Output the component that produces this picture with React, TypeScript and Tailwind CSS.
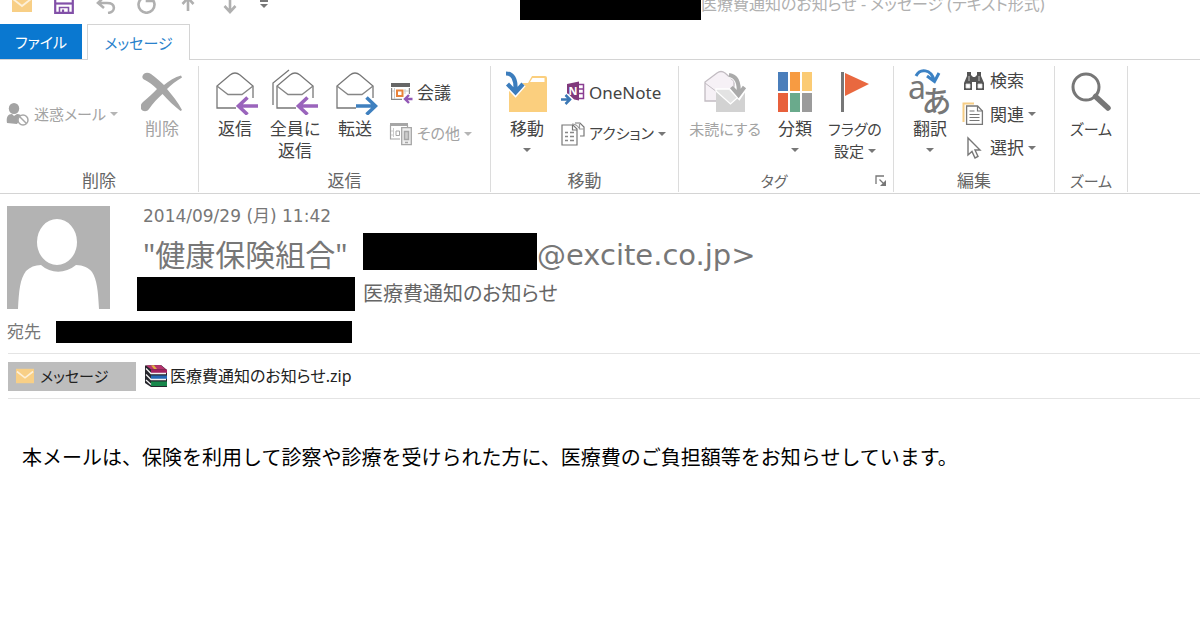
import React from 'react';
import { clsx } from 'clsx';

interface IconProps {
  className?: string;
}

interface LargeButtonProps {
  icon: React.ReactNode;
  lines: string[];
  width?: string;
  size?: string;
  menu?: boolean;
  disabled?: boolean;
}

interface SmallButtonProps {
  icon: React.ReactNode;
  label: string;
  size?: string;
  menu?: boolean;
  disabled?: boolean;
}

interface GroupProps {
  label: string;
  width: string;
  size?: string;
  launcher?: boolean;
  children: React.ReactNode;
}

const Caret: React.FC<IconProps> = ({ className }) => (
  <svg viewBox="0 0 8 4" className={clsx('h-1 w-2 shrink-0', className)} fill="currentColor" aria-hidden="true">
    <path d="M0 0h8L4 4z" />
  </svg>
);

const MailIcon: React.FC<IconProps> = ({ className }) => (
  <svg viewBox="0 0 20 16" className={className} aria-hidden="true">
    <rect width="20" height="16" fill="#f8cf86" />
    <path d="M1 3l9 7 9-7" fill="none" stroke="#fdf0d8" strokeWidth="1.8" />
  </svg>
);

const SaveIcon = () => (
  <svg viewBox="0 0 20 20" className="size-5" fill="none" stroke="#8250a8" strokeWidth="2.2" aria-hidden="true">
    <path d="M1.2 1.2h17.6v17.6H1.200z" />
    <path d="M1 9.500h18" />
    <path d="M5.500 19v-5.500h9V19" strokeWidth="1.600" />
    <path d="M9 15.500v3.500" />
  </svg>
);

const UndoIcon = () => (
  <svg viewBox="0 0 20 20" className="size-5" fill="none" stroke="#b0b0b0" strokeWidth="2.6" aria-hidden="true">
    <path d="M8 3L2 9l6 5M2 9h9c9 0 9 9 1 10" />
  </svg>
);

const RedoIcon = () => (
  <svg viewBox="0 0 20 20" className="size-5" fill="none" stroke="#b0b0b0" strokeWidth="2.6" aria-hidden="true">
    <path d="M15.500 4.500a8 8 0 1 1-10 0M11 0v7h7" />
  </svg>
);

const ArrowIcon: React.FC<{ down?: boolean }> = ({ down }) => (
  <svg viewBox="0 0 20 20" className="size-5" fill="none" stroke="#b0b0b0" strokeWidth="2.6" aria-hidden="true">
    <path d={down ? 'M10 1v16M4.500 12l5.500 6 5.500-6' : 'M10 17V4M4.500 10L10 4l5.500 6'} />
  </svg>
);

const JunkIcon = () => (
  <svg viewBox="0 0 24 24" className="size-6" aria-hidden="true">
    <ellipse cx="8" cy="6.500" rx="5.200" ry="5.500" fill="#a3a3a3" />
    <path d="M1 21c-1-6 1-9 5-9l2 2 3-2c3 0 4 1 5 3l-5 7z" fill="#a3a3a3" />
    <circle cx="17" cy="18" r="5" fill="#fff" stroke="#a8a8a8" strokeWidth="1.500" />
    <path d="M13.500 14.500l7 7" stroke="#a8a8a8" strokeWidth="1.500" />
  </svg>
);

const DeleteIcon = () => (
  <svg viewBox="0 0 42 40" className="h-10 w-[42px]" fill="#a6a6a6" aria-hidden="true">
    <path d="M1.500 4C3 0 7 0 10 2c5 4 9 7 13 11C28 9 34 5 40 3.500l1 2C35 9 30 13 26 17c5 6 11 13 15 21l-1.500 1C33 34 27 28 21.500 22 17 26 12 31 8 37c-2 3-6 3-8 0-1-3 0-5 2-7 5-4 10-9 14-13C12 13 8 10 4 8 2 7 1 6 1.500 4z" />
  </svg>
);

const EnvelopeIcon: React.FC<{ arrow: 'reply' | 'forward'; stacked?: boolean }> = ({ arrow, stacked }) => (
  <svg viewBox="0 0 46 46" className="size-[46px]" fill="none" aria-hidden="true">
    {stacked && <path d="M1 36V14L17 1" stroke="#777" strokeWidth="1.300" />}
    <path d="M24 39H5V17L18 6q5-4 10 0l13 11v12" fill="#fff" stroke="#777" strokeWidth="1.300" />
    <path d="M5 17l11 8.500h14L41 17" stroke="#858585" strokeWidth="1.300" />
    {arrow === 'reply' ? (
      <path d="M46 37H27M35.500 28.500L26.500 37l9 8.500" stroke="#9a64bc" strokeWidth="3.600" />
    ) : (
      <path d="M24 37h19M34.500 28.500l9 8.500-9 8.500" stroke="#3f80bf" strokeWidth="3.600" />
    )}
  </svg>
);

const MeetingIcon = () => (
  <svg viewBox="0 0 24 24" className="size-6" fill="none" aria-hidden="true">
    <path d="M2.600 7v11.400H13M20.400 7v6" stroke="#888" strokeWidth="1.200" />
    <path d="M2 2h19v4H2z" fill="#666" />
    <path d="M5.500 7v11M16 8v5M3 10h3M15 10h5" stroke="#ccc" />
    <path d="M8 9.500h5.500V15H8z" fill="#fff" stroke="#e8823a" strokeWidth="2" />
    <path d="M23.500 18h-7M20 14l-4 4 4 4" stroke="#9257b5" strokeWidth="2.400" />
  </svg>
);

const MoreIcon = () => (
  <svg viewBox="0 0 24 24" className="size-6" fill="none" stroke="#a6a6a6" aria-hidden="true">
    <path d="M1 2.500h18" strokeWidth="3" />
    <path d="M1.500 3v14H11M18.500 3v2" strokeWidth="1.200" />
    <path d="M4.500 6v9M2 9h3M2 13h3" stroke="#ccc" />
    <path d="M7 9h3.500v4.500H7z" />
    <path d="M12.700 5.700h9.600v17h-9.600z" fill="#eee" strokeWidth="1.300" />
    <path d="M15.500 9.500h4v8h-4z" fill="#ccc" strokeWidth="1.500" />
    <path d="M16 20.500h3" strokeWidth="1.500" />
  </svg>
);

const MoveIcon = () => (
  <svg viewBox="0 0 44 44" className="size-11" fill="none" aria-hidden="true">
    <path d="M4 42V13h19l4-7h13q2 0 2 2v34z" fill="#fbcf7e" />
    <path d="M25 12l2.500-4h12v4z" fill="#fff" />
    <path d="M1 4c7 0 10 6 9.500 16M2.500 14l8 8.500 7.500-8.500" stroke="#fff" strokeWidth="7" />
    <path d="M1 3.500c7 0 10 6 9.500 16.500M2.500 14l8 8.500 7.500-8.500" stroke="#3c7dbd" strokeWidth="4.200" />
  </svg>
);

const OneNoteIcon = () => (
  <svg viewBox="0 0 24 24" className="size-6" fill="none" aria-hidden="true">
    <path d="M16 3.500h6.500v14H16M16 8h6M16 12.500h6" stroke="#8a3e92" strokeWidth="1.500" />
    <path d="M6 3l12-2.500v19L6 17z" fill="#80397b" />
    <text x="7.500" y="14" fontSize="11" fontWeight="700" fill="#fff" className="font-['Noto_Sans',sans-serif]">N</text>
    <path d="M0 18.500h8M5 14l4.500 4.500L5 23" stroke="#fff" strokeWidth="5" />
    <path d="M0 18.500h8M4.500 14L9 18.500 4.500 23" stroke="#3b78b5" strokeWidth="2.500" />
  </svg>
);

const ActionIcon = () => (
  <svg viewBox="0 0 24 24" className="size-6" fill="none" stroke="#777" strokeWidth="1.200" aria-hidden="true">
    <path d="M14 1h5l4 4v9h-4" />
    <path d="M11 2c3 0 5 1 7 4M18.500 2v5h4" stroke="#999" />
    <path d="M1 3h11l4 4v16H1z" fill="#fff" />
    <path d="M11.500 3v5H16" />
    <path d="M4 10.500h3M9 10.500h4M4 14.500h3M9 14.500h4M4 18.500h3M9 18.500h4" stroke="#888" strokeWidth="1.500" />
  </svg>
);

const UnreadIcon = () => (
  <svg viewBox="0 0 44 44" className="size-11" fill="none" aria-hidden="true">
    <path d="M2 31V12L14 3q4-3 8 0l9 8v20z" fill="#f6f1f6" stroke="#c2bcc2" strokeWidth="1.300" />
    <path d="M2 13l12 9" stroke="#c2bcc2" />
    <path d="M13 20h29v22H13z" fill="#d2d2d2" />
    <path d="M13 21l14.500 13L42 21v-2H13z" fill="#e3e3e3" stroke="#fff" strokeWidth="1.300" />
    <path d="M26 5c8 1 11 7 10 18M28.500 18l7.500 8 6-9" stroke="#fff" strokeWidth="6" />
    <path d="M26 5c8 1 10.500 8 9.500 19M28.500 17l7 8 6-8" stroke="#aaa" strokeWidth="4" />
  </svg>
);

const CategoryIcon = () => (
  <svg viewBox="0 0 34 40" className="h-10 w-[34px]" aria-hidden="true">
    <path d="M0 0h10v19H0z" fill="#4a7ebb" />
    <path d="M12 0h10v19H12z" fill="#f79b42" />
    <path d="M24 0h10v19H24z" fill="#fbcb74" />
    <path d="M0 21h10v19H0z" fill="#e8603c" />
    <path d="M12 21h10v19H12z" fill="#6aaa8c" />
    <path d="M24 21h10v19H24z" fill="#9b9b9b" />
  </svg>
);

const FlagIcon = () => (
  <svg viewBox="0 0 30 40" className="h-10 w-[30px]" aria-hidden="true">
    <path d="M1 0h3v40H1z" fill="#777" />
    <path d="M5 1l24 11L5 24z" fill="#e9683f" />
  </svg>
);

const TranslateIcon = () => (
  <svg viewBox="0 0 44 48" className="h-12 w-11 overflow-visible" fill="none" aria-hidden="true">
    <text x="0" y="31" fontSize="32" fill="#777" className="font-['Noto_Sans',sans-serif]">a</text>
    <text x="14" y="44" fontSize="30" fontWeight="500" fill="#777" className="font-['Noto_Sans_CJK_JP',sans-serif]">あ</text>
    <path d="M8 8c4-8 15-7 18 4M19 8l7.500 5.500L31 5" stroke="#3c82c4" strokeWidth="3" />
  </svg>
);

const FindIcon = () => (
  <svg viewBox="0 0 24 24" className="size-6" aria-hidden="true">
    <path d="M5 3h4v3l2 2h2l2-2V3h4v4l3 7v7h-8v-8h-4v8H2v-7l3-7z" fill="#555" />
    <path d="M4 15h4v4H4zM16 15h4v4h-4zM7 7v5M17 7v5" fill="#fff" stroke="#ddd" strokeWidth=".8" />
  </svg>
);

const RelatedIcon = () => (
  <svg viewBox="0 0 24 24" className="size-6" fill="none" aria-hidden="true">
    <path d="M1.500 20V1.500H12" stroke="#f6cd85" strokeWidth="2" />
    <path d="M4.600 4h11l4.800 5v13.400H4.600z" fill="#fff" stroke="#777" strokeWidth="1.300" />
    <path d="M15.500 4v5h5M7.500 9h5M7.500 12.500h10M7.500 15.500h10M7.500 18.500h10" stroke="#777" strokeWidth="1.200" />
  </svg>
);

const SelectIcon = () => (
  <svg viewBox="0 0 24 24" className="size-6" aria-hidden="true">
    <path d="M6 2v17l4-3.500 3 6.500 3-1.500-3-6.500h5z" fill="#fff" stroke="#777" strokeWidth="1.400" />
  </svg>
);

const ZoomIcon = () => (
  <svg viewBox="0 0 40 40" className="size-10" fill="none" stroke="#777" aria-hidden="true">
    <circle cx="15" cy="15" r="13" strokeWidth="3" />
    <path d="M24.500 24.500L37 36" strokeWidth="5.500" strokeLinecap="round" />
  </svg>
);

const ArchiveIcon = () => (
  <svg viewBox="0 0 24 24" className="size-6" aria-hidden="true">
    <path d="M1 1.500L17 1l6 5v17H7l-6-4z" fill="#26262c" />
    <path d="M2 1.500L16.500 1l5.500 4.500H7z" fill="#b5326e" />
    <path d="M7 5.500h16V9H7z" fill="#a3205f" />
    <path d="M7 11.500h16V15H7z" fill="#2668b4" />
    <path d="M7 17.500h16V22H7z" fill="#17874b" />
    <path d="M2 4.500l5 5h15M2 10.500l5 5h15M2 16l5 4.500" fill="none" stroke="#f3f3f3" strokeWidth="1.300" />
    <path d="M7 1.500l3-.2 3 3.700h-3z" fill="#e0b040" />
  </svg>
);

const LauncherIcon = () => (
  <svg viewBox="0 0 12 12" className="size-3" fill="none" stroke="#777" strokeWidth="1.300" aria-hidden="true">
    <path d="M1 9V1h8M4.500 4.500l5 5" />
    <path d="M11 5v6H5z" fill="#777" stroke="none" />
  </svg>
);

const LargeButton: React.FC<LargeButtonProps> = ({ icon, lines, width = 'w-15', size, menu, disabled }) => {
  const last = lines.length - 1;
  return (
    <button
      type="button"
      disabled={disabled}
      className={clsx('flex shrink-0 flex-col items-center', width, size, disabled ? 'text-[#a3a3a3]' : 'text-[#444]')}
    >
      <span className="flex h-[52px] items-center justify-center">{icon}</span>
      {lines.map((line, i) => (
        <span key={line} className="flex items-center gap-1 leading-[22px] whitespace-nowrap">
          {line}
          {menu && last > 0 && i === last && <Caret className="text-[#777]" />}
        </span>
      ))}
      {menu && last === 0 && <Caret className="mt-2 text-[#777]" />}
    </button>
  );
};

const SmallButton: React.FC<SmallButtonProps> = ({ icon, label, size, menu, disabled }) => (
  <button
    type="button"
    disabled={disabled}
    className={clsx('flex items-center gap-1 whitespace-nowrap', disabled ? 'text-[#a3a3a3]' : 'text-[#444]')}
  >
    {icon}
    <span className={size}>{label}</span>
    {menu && <Caret className={disabled ? 'text-[#b5b5b5]' : 'text-[#777]'} />}
  </button>
);

const Group: React.FC<GroupProps> = ({ label, width, size, launcher, children }) => (
  <section aria-label={label} className={clsx('flex shrink-0 flex-col border-r border-[#dcdcdc]', width)}>
    <div className="flex h-26 px-1.5">{children}</div>
    <div className="flex items-center text-[#666]">
      <span className={clsx('flex-1 text-center leading-[22px]', size)}>{label}</span>
      {launcher && (
        <button type="button" aria-label="タグの詳細設定" className="flex w-6 justify-center">
          <LauncherIcon />
        </button>
      )}
    </div>
  </section>
);

const QuickAccess = () => (
  <div className="h-6 overflow-hidden">
    <div className="-mt-4 flex h-10 items-center">
      <div className="flex w-[520px] shrink-0 items-center gap-5 pl-3">
        <MailIcon className="h-4 w-5" />
        <button type="button" aria-label="上書き保存" className="ml-0.5"><SaveIcon /></button>
        <button type="button" aria-label="元に戻す" className="ml-0.5"><UndoIcon /></button>
        <button type="button" aria-label="やり直し"><RedoIcon /></button>
        <button type="button" aria-label="前のアイテム" className="ml-0.5"><ArrowIcon /></button>
        <button type="button" aria-label="次のアイテム" className="ml-0.5"><ArrowIcon down /></button>
        <button type="button" aria-label="カスタマイズ" className="flex flex-col gap-0.5 text-[#777]">
          <span className="h-0.5 w-2 bg-[#777]" />
          <Caret />
        </button>
      </div>
      <div className="h-8 w-[181px] shrink-0 bg-black" />
      <h1 className="text-base leading-7 whitespace-nowrap text-[#b0b0b0]">医療費通知のお知らせ - メッセージ (テキスト形式)</h1>
    </div>
  </div>
);

const Tabs = () => (
  <nav className="flex h-9 border-b border-[#d4d4d4] text-[15px] leading-9">
    <button type="button" className="w-[82px] bg-[#0a78d0] text-white">ファイル</button>
    <button type="button" className="-mb-px ml-[5px] w-[103px] border border-b-0 border-[#d4d4d4] bg-white text-[#2a82cc]">
      メッセージ
    </button>
  </nav>
);

const Ribbon = () => (
  <div className="flex overflow-hidden border-b border-[#d4d4d4] pt-1.5 pb-px">
    <Group label="削除" width="w-[199px]">
      <div className="flex w-[126px] shrink-0 items-center pb-2">
        <SmallButton icon={<JunkIcon />} label="迷惑メール" size="text-[15px]" menu disabled />
      </div>
      <LargeButton icon={<DeleteIcon />} lines={['削除']} disabled />
    </Group>

    <Group label="返信" width="w-[292px]">
      <LargeButton icon={<EnvelopeIcon arrow="reply" />} lines={['返信']} />
      <LargeButton icon={<EnvelopeIcon arrow="reply" stacked />} lines={['全員に', '返信']} />
      <LargeButton icon={<EnvelopeIcon arrow="forward" />} lines={['転送']} />
      <div className="flex flex-col gap-4 pt-3.5 pl-1">
        <SmallButton icon={<MeetingIcon />} label="会議" />
        <SmallButton icon={<MoreIcon />} label="その他" size="text-[15px]" menu disabled />
      </div>
    </Group>

    <Group label="移動" width="w-[188px]">
      <LargeButton icon={<MoveIcon />} lines={['移動']} menu />
      <div className="flex flex-col gap-4 pt-3.5 pl-1">
        <SmallButton icon={<OneNoteIcon />} label="OneNote" />
        <SmallButton icon={<ActionIcon />} label="アクション" size="text-[15px]" menu />
      </div>
    </Group>

    <Group label="タグ" width="w-[215px]" size="text-[15px]" launcher>
      <LargeButton icon={<UnreadIcon />} lines={['未読にする']} width="w-20" size="text-[15px]" disabled />
      <LargeButton icon={<CategoryIcon />} lines={['分類']} menu />
      <LargeButton icon={<FlagIcon />} lines={['フラグの', '設定']} size="text-[15px]" menu />
    </Group>

    <Group label="編集" width="w-[161px]">
      <LargeButton icon={<TranslateIcon />} lines={['翻訳']} menu />
      <div className="flex flex-col gap-2 pt-0.5 pl-0.5">
        <SmallButton icon={<FindIcon />} label="検索" />
        <SmallButton icon={<RelatedIcon />} label="関連" menu />
        <SmallButton icon={<SelectIcon />} label="選択" menu />
      </div>
    </Group>

    <Group label="ズーム" width="w-[73px]" size="text-[15px]">
      <LargeButton icon={<ZoomIcon />} lines={['ズーム']} size="text-[15px]" />
    </Group>
  </div>
);

const MessageHeader = () => (
  <header className="pt-3 pl-[7px] text-[#777]">
    <div className="flex">
      <svg viewBox="0 0 103 103" className="size-[103px] shrink-0" role="img" aria-label="差出人">
        <rect width="103" height="103" fill="#b3b3b3" />
        <path d="M11 103C12 84 13 73 19 65c4-4 9-6 15-6 10 9 24 9 35 0 7 0 13 3 16 7 5 8 6 18 7 37z" fill="#fff" />
        <ellipse cx="50" cy="36" rx="21" ry="24" fill="#fff" stroke="#b3b3b3" strokeWidth="2" />
      </svg>
      <div className="flex flex-col pl-[27px] whitespace-nowrap">
        <time dateTime="2014-09-29T11:42" className="pl-1.5 font-['DejaVu_Sans','Noto_Sans_CJK_JP',sans-serif] leading-5">
          2014/09/29 (月) 11:42
        </time>
        <div className="flex items-start pt-[7px] pl-1.5 leading-11">
          <span className="w-[220px] text-3xl leading-11">"健康保険組合"</span>
          <span className="h-[37px] w-[174px] bg-black" />
          <span className="font-['DejaVu_Sans',sans-serif] text-[29px] leading-11">@excite.co.jp&gt;</span>
        </div>
        <div className="flex items-center gap-2 text-[#666]">
          <span className="h-[34px] w-[218px] bg-black" />
          <h2 className="text-xl leading-7">医療費通知のお知らせ</h2>
        </div>
      </div>
    </div>
    <div className="flex h-[42px] items-center gap-[15px]">
      <span>宛先</span>
      <span className="h-[22px] w-[296px] bg-black" />
    </div>
  </header>
);

const Attachments = () => (
  <div className="ml-2 flex h-[46px] items-center gap-2 border-y border-[#e4e4e4] text-[#222]">
    <button type="button" className="flex h-[29px] w-32 items-center gap-1.5 bg-[#bdbdbd] pl-2 text-[15px]">
      <MailIcon className="h-4 w-[18px]" />
      メッセージ
    </button>
    <a href="#attachment" className="flex items-center gap-0.5 text-base">
      <ArchiveIcon />
      医療費通知のお知らせ.zip
    </a>
  </div>
);

export default function App() {
  return (
    <div className="min-h-screen overflow-hidden bg-white font-['Noto_Sans','Noto_Sans_CJK_JP',sans-serif] text-[17px] [font-feature-settings:'palt']">
      <QuickAccess />
      <Tabs />
      <Ribbon />
      <MessageHeader />
      <Attachments />
      <p className="px-[22px] pt-11 font-['Noto_Sans_CJK_JP',sans-serif] text-xl leading-7 text-black [font-feature-settings:normal]">
        本メールは、保険を利用して診察や診療を受けられた方に、医療費のご負担額等をお知らせしています。
      </p>
    </div>
  );
}
